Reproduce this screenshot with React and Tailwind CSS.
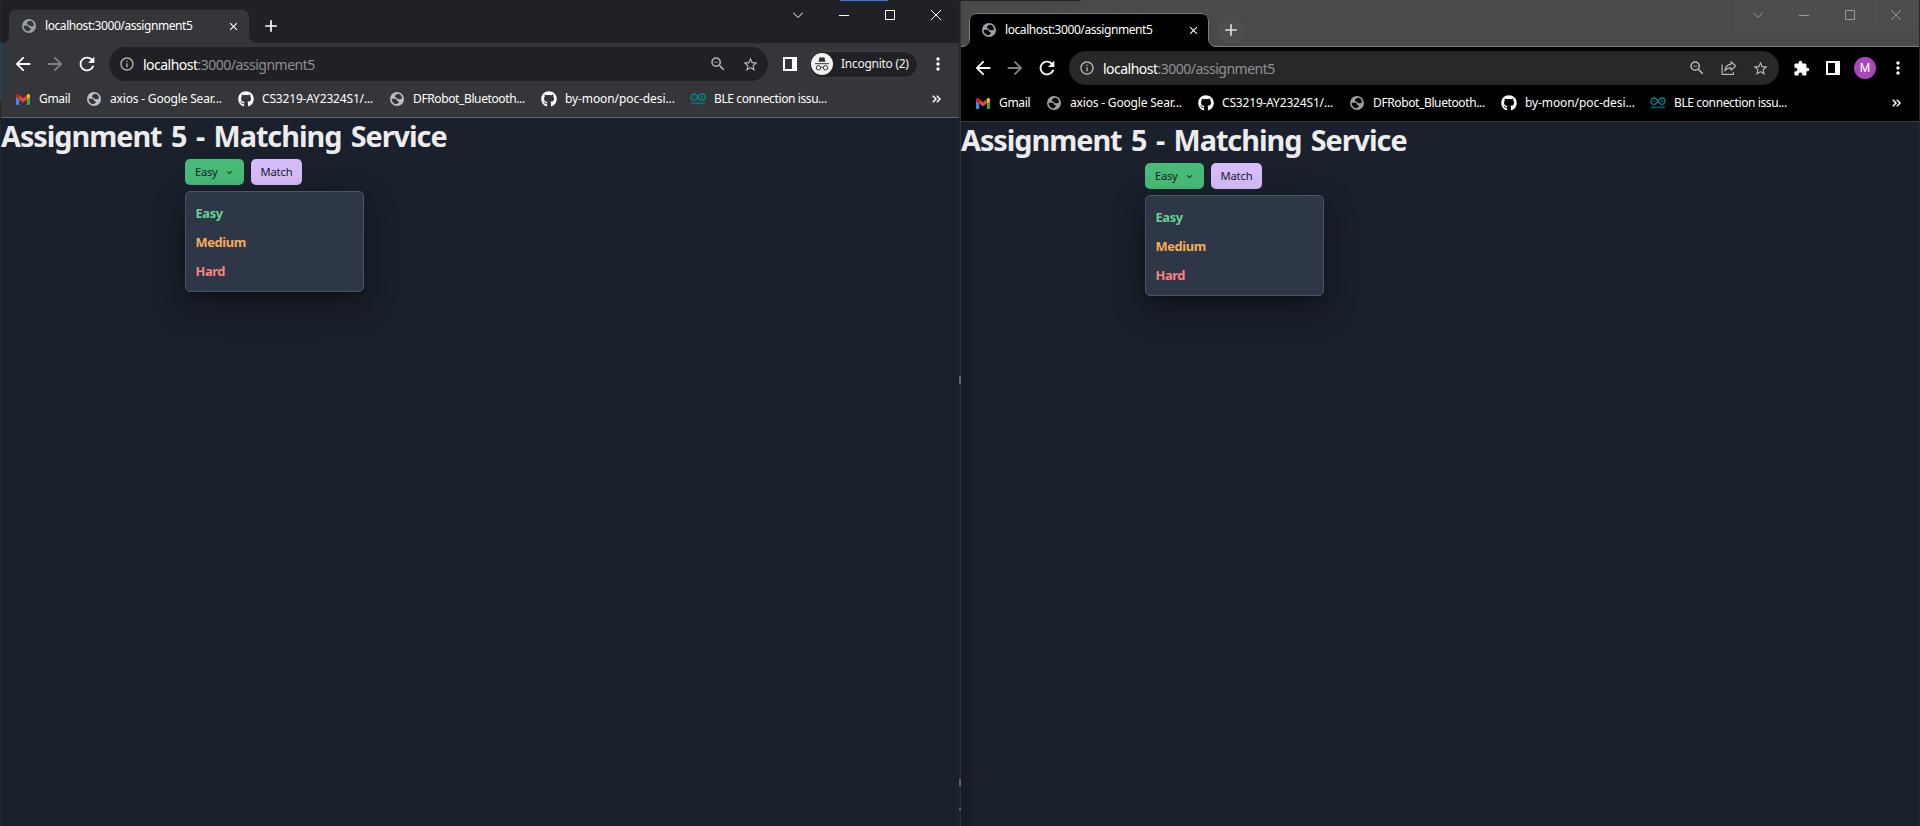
import { MdArrowBack, MdArrowForward, MdRefresh, MdClose, MdAdd, MdInfoOutline, MdZoomOut, MdStarBorder, MdExtension, MdMoreVert } from "react-icons/md";
import { FaGithub } from "react-icons/fa";
import clsx from "clsx";

function Globe({ className, cut }) {
  return (
    <svg viewBox="0 0 14 14" className={clsx("block size-[14px] shrink-0", className)}>
      <circle cx="7" cy="7" r="7" fill="currentColor" />
      <path d="M8.800 1.800C6.800 1.900 5.400 2.700 5 3.900c-.2.900.2 1.500 1.100 1.500.9.100 1 .6 1.200 1.200.3.800 1.300.7 2.400.7.900 0 1.200-.5 2.200-.6.200-2.200-1-4-3.100-4.900Z" className={cut} />
      <path d="M1.600 6.700h3.200c1.300 0 2 .6 2 1.400 0 .8.600 1 1.400 1.100 1 .2.800 1.200.1 1.700-.6.400-.9.800-1.900 1.300A5.300 5.300 0 0 1 1.600 6.700Z" className={cut} />
    </svg>
  );
}

function Gmail() {
  return (
    <svg viewBox="0 0 14 11" className="block h-[11px] w-[14px] shrink-0">
      <path d="M0 2.200V10a1 1 0 0 0 1 1h2.200V4.500z" fill="#4285f4" />
      <path d="M14 2.200V10a1 1 0 0 1-1 1h-2.200V4.500z" fill="#34a853" />
      <path d="M10.800 1v4.600L14 3.200V1.700c0-1.500-1.700-2.100-2.700-1.300z" fill="#fbbc04" />
      <path d="M3.200 5.600V1.200L7 4l3.800-2.800v4.400L7 8.400z" fill="#ea4335" />
      <path d="M0 1.700v1.500l3.200 2.400V1.200L2.700.5C1.600-.4 0 .2 0 1.700z" fill="#c5221f" />
    </svg>
  );
}

function Arduino() {
  return (
    <svg viewBox="0 0 16 12" className="block h-3 w-4 shrink-0" fill="none" stroke="#00878f">
      <path d="M8 4.200C6.800 2 5.800 1 4.200 1a3.200 3.200 0 0 0 0 6.400C5.800 7.400 6.800 6.400 8 4.200s2.200-3.200 3.800-3.200a3.200 3.200 0 0 1 0 6.400C10.200 7.400 9.200 6.400 8 4.200Z" strokeWidth="1.300" />
      <path d="M3 4.200h2.400M10.600 4.200H13M11.800 3v2.400" strokeWidth="0.800" />
      <path d="M1 10.300h14" strokeWidth="1.800" opacity="0.65" />
    </svg>
  );
}

function Share() {
  return (
    <svg viewBox="0 0 16 16" className="block size-4" fill="none" stroke="currentColor" strokeWidth="1.200">
      <path d="M1.100 4.500v9.900h11.300v-2.200" />
      <path d="M10 1.800 14.700 6 10 10.200V7.900C7 7.900 5.200 8.900 3.900 11c.4-3.600 2.500-6.300 6.100-6.800z" strokeLinejoin="round" />
    </svg>
  );
}

function SidePanel() {
  return (
    <svg viewBox="0 0 14 14" className="block size-[14px]">
      <path fillRule="evenodd" d="M0 0h14v14H0zM2 2v10h7V2z" fill="currentColor" />
    </svg>
  );
}

function IncognitoFace() {
  return (
    <svg viewBox="0 0 22 22" className="block size-[22px] shrink-0">
      <circle cx="11" cy="11" r="11" fill="#f1f3f4" />
      <path d="M7.600 8.800 8.400 4.900c.1-.6.500-.8 1-.6l1.600.4 1.600-.4c.5-.2.900 0 1 .6l.8 3.900z" fill="#303134" />
      <path d="M4 10.700h14" stroke="#303134" strokeWidth="1" />
      <g fill="none" stroke="#303134" strokeWidth="1">
        <circle cx="7.500" cy="14.800" r="2.200" />
        <circle cx="14.500" cy="14.800" r="2.200" />
        <path d="M9.700 14.600c.8-.5 1.800-.5 2.600 0" />
      </g>
    </svg>
  );
}

const controls = [
  { name: "search", d: "M0 2.500 5 7.500 10 2.500" },
  { name: "minimize", d: "M0 5.500h10" },
  { name: "maximize", d: "M.5.500h9v9h-9z" },
  { name: "close", d: "M0 0 10 10M10 0 0 10" },
];

function WindowButtons({ dark }) {
  return (
    <div className={clsx("mr-px ml-auto flex h-[30px] gap-px", dark ? "text-[#9a9a9a]" : "text-white")}>
      {controls.map((c) => (
        <div key={c.name} className={clsx("flex w-[45px] items-center justify-center", dark && "bg-[#4d4d4d]")}>
          <svg viewBox="0 0 10 10" className="size-[10px]" fill="none" stroke="currentColor">
            <path d={c.d} />
          </svg>
        </div>
      ))}
    </div>
  );
}

const bookmarks = [
  { icon: "gmail", label: "Gmail", box: "w-[71px]", text: "tracking-[-0.3px]" },
  { icon: "globe", label: "axios - Google Sear...", box: "w-[152px]", text: "tracking-[-0.18px]" },
  { icon: "github", label: "CS3219-AY2324S1/...", box: "w-[151px]", text: "tracking-[-0.17px]" },
  { icon: "globe", label: "DFRobot_Bluetooth...", box: "w-[152px]", text: "tracking-[-0.38px]" },
  { icon: "github", label: "by-moon/poc-desi...", box: "w-[149px]", text: "tracking-[-0.1px]" },
  { icon: "arduino", label: "BLE connection issu...", box: "w-[150px]", text: "tracking-[-0.38px]" },
];

function BookmarkIcon({ name, dark }) {
  if (name === "gmail") return <Gmail />;
  if (name === "globe") return <Globe className={dark ? "text-[#9aa0a6]" : "text-[#bdc1c6]"} cut={dark ? "fill-black" : "fill-[#35363a]"} />;
  if (name === "github") return <FaGithub className="size-4 shrink-0 text-white" />;
  return <Arduino />;
}

function Bookmarks({ dark }) {
  return (
    <div className={clsx("flex h-[37px] items-center border-b pl-[14px] text-[12px] text-white", dark ? "border-[#3c3c3c] bg-black" : "border-[#5f6368] bg-[#35363a]")}>
      {bookmarks.map((b) => (
        <div key={b.label} className={clsx("flex shrink-0 items-center gap-2", b.box)}>
          <div className="flex w-4 shrink-0 justify-center">
            <BookmarkIcon name={b.icon} dark={dark} />
          </div>
          <span className={clsx("whitespace-nowrap", b.text)}>{b.label}</span>
        </div>
      ))}
      <svg viewBox="0 0 9 8" className="mr-[18px] ml-auto h-2 w-[9px]" fill="none" stroke="currentColor" strokeWidth="1.500">
        <path d="M.8.800 4 4 .8 7.200M4.800.800 8 4 4.800 7.200" />
      </svg>
    </div>
  );
}

function TabStrip({ dark }) {
  return (
    <div className={clsx("flex items-start", dark ? "h-[47px] border-b border-[#7d7d7d] bg-[#4a4a4a]" : "h-[43px] bg-[#202124]")}>
      <div className={clsx("relative flex h-[34px] w-[256px] shrink-0 items-center", dark ? "mt-[13px]" : "mt-[9px]")}>
        <svg viewBox="0 0 256 34" className="absolute inset-0 h-[34px] w-[256px]">
          <path d="M0 34C5 34 8 31 8 26V8C8 3 11 .5 16 .5H240C245 .5 248 3 248 8V26C248 31 251 34 256 34Z" fill={dark ? "#000000" : "#35363a"} />
          {dark && <path d="M0 33.500C5.500 33.500 8.500 30.500 8.500 26V8C8.500 3.500 11.500.500 16 .5H240C244.500.500 247.500 3.500 247.500 8V26C247.500 30.500 250.500 33.500 256 33.500" fill="none" stroke="#7d7d7d" />}
        </svg>
        <div className="relative flex w-full items-center pl-[21px] text-white">
          <Globe className="text-[#9aa0a6]" cut={dark ? "fill-black" : "fill-[#35363a]"} />
          <span className="ml-[9px] text-[12px] tracking-[-0.43px] whitespace-nowrap">localhost:3000/assignment5</span>
          <MdClose className="mr-[17px] ml-auto size-[13px]" />
        </div>
      </div>
      <div className={clsx("flex size-7 items-center justify-center rounded-full", dark ? "mt-[16px] bg-[#4d4d4d] text-[#dddddd]" : "mt-[12px] text-white")}>
        <MdAdd className="size-5" />
      </div>
      <WindowButtons dark={dark} />
    </div>
  );
}

function Toolbar({ dark }) {
  return (
    <div className={clsx("flex h-[38px] items-center pt-1 text-white", dark ? "bg-black" : "bg-[#35363a]")}>
      <MdArrowBack className="ml-[11px] size-[22px]" />
      <MdArrowForward className="ml-[10px] size-[22px] text-[#808080]" />
      <MdRefresh className="ml-[10px] size-[22px]" />
      <div className={clsx("ml-[11px] flex h-[34px] items-center rounded-full text-[#b4b7bb]", dark ? "w-[710px] bg-[#282828]" : "w-[659px] bg-[#202124]")}>
        <MdInfoOutline className="ml-[10px] size-4" />
        <div className="ml-2 text-[14px] tracking-[-0.51px] whitespace-nowrap text-[#8e9196]">
          <span className="text-white">localhost</span>:3000/assignment5
        </div>
        <MdZoomOut className="ml-auto size-[18px]" />
        {dark && (
          <div className="ml-[15px]">
            <Share />
          </div>
        )}
        <MdStarBorder className={clsx("ml-[15px] size-[17px]", dark ? "mr-[10px]" : "mr-[9px]")} />
      </div>
      {dark ? (
        <>
          <MdExtension className="ml-[14px] size-[17px]" />
          <div className="ml-[16px]">
            <SidePanel />
          </div>
          <div className="ml-[14px] flex size-[22px] items-center justify-center rounded-full bg-[#ab47bc] font-[Roboto] text-[12px]">M</div>
        </>
      ) : (
        <>
          <div className="ml-[15px]">
            <SidePanel />
          </div>
          <div className="ml-[12px] flex h-[27px] w-[109px] items-center rounded-full border border-[#3f4044] bg-[#202124] pl-px">
            <IncognitoFace />
            <span className="ml-[8px] text-[12px] tracking-[-0.27px] whitespace-nowrap text-[#f1f3f4]">Incognito (2)</span>
          </div>
        </>
      )}
      <MdMoreVert className="mr-[11px] ml-auto size-5" />
    </div>
  );
}

function AssignmentPage({ dark }) {
  return (
    <div className={clsx("min-h-0 flex-1 bg-[#1a202c]", dark && "bg-linear-to-r from-[#181b28] to-[#1a202c] to-[14px]")}>
      <h1 className="h-[41px] text-[28.8px] leading-[35px] font-bold tracking-[-1.03px] whitespace-nowrap text-[#ececec] [word-spacing:3px]">Assignment 5 - Matching Service</h1>
      <div className="ml-[184px] flex gap-[7px] text-[11.2px] text-[#1a202c]">
        <button className="flex h-[26px] w-[59px] items-center rounded-[5px] bg-[#48bb78] pl-[10px]">
          <span className="tracking-[-0.3px]">Easy</span>
          <svg viewBox="0 0 24 24" className="ml-[7px] size-[11px]" fill="currentColor">
            <path d="M16.590 8.590 12 13.170 7.410 8.590 6 10l6 6 6-6z" />
          </svg>
        </button>
        <button className="h-[26px] w-[51px] rounded-[5px] bg-[#d6bcfa] tracking-[-0.1px]">Match</button>
      </div>
      <div className="relative mt-[6px] ml-[184px] flex h-[101px] w-[179px] flex-col rounded-[5px] border border-[#4a5568] bg-[#2d3748] pt-[7px] pl-[9.500px] text-[12.8px] leading-[29px] font-bold tracking-[-0.35px] shadow-[0_4px_8px_rgba(0,0,0,0.2),0_12px_32px_rgba(0,0,0,0.4)]">
        <span className="text-[#68d391]">Easy</span>
        <span className="text-[#f6ad55]">Medium</span>
        <span className="text-[#fc8181]">Hard</span>
      </div>
    </div>
  );
}

function BrowserWindow({ dark }) {
  return (
    <div className="flex w-[958px] flex-col">
      <TabStrip dark={dark} />
      <Toolbar dark={dark} />
      <Bookmarks dark={dark} />
      <AssignmentPage dark={dark} />
    </div>
  );
}

export default function App() {
  return (
    <div className="relative flex h-[826px] w-[1920px] overflow-hidden bg-[#26282a] font-['Noto_Sans',sans-serif]">
      <div className="w-px pt-[42px]">
        <div className="h-[58px] bg-[#17456b]" />
      </div>
      <BrowserWindow />
      <div className="flex w-[2px] flex-col bg-linear-to-r from-[#22262a] from-50% to-[#37322d] to-50% pt-[376px]">
        <div className="h-2 bg-[#62645f]" />
        <div className="mt-[395px] h-[7px] bg-[#56646c]" />
        <div className="mt-[22px] h-[2px] bg-[#56646c]" />
      </div>
      <BrowserWindow dark />
      <div className="absolute top-0 left-0 flex h-px w-[1081px] bg-[#232621] pl-[840px]">
        <div className="w-12 bg-[#3b78d8]" />
      </div>
    </div>
  );
}
